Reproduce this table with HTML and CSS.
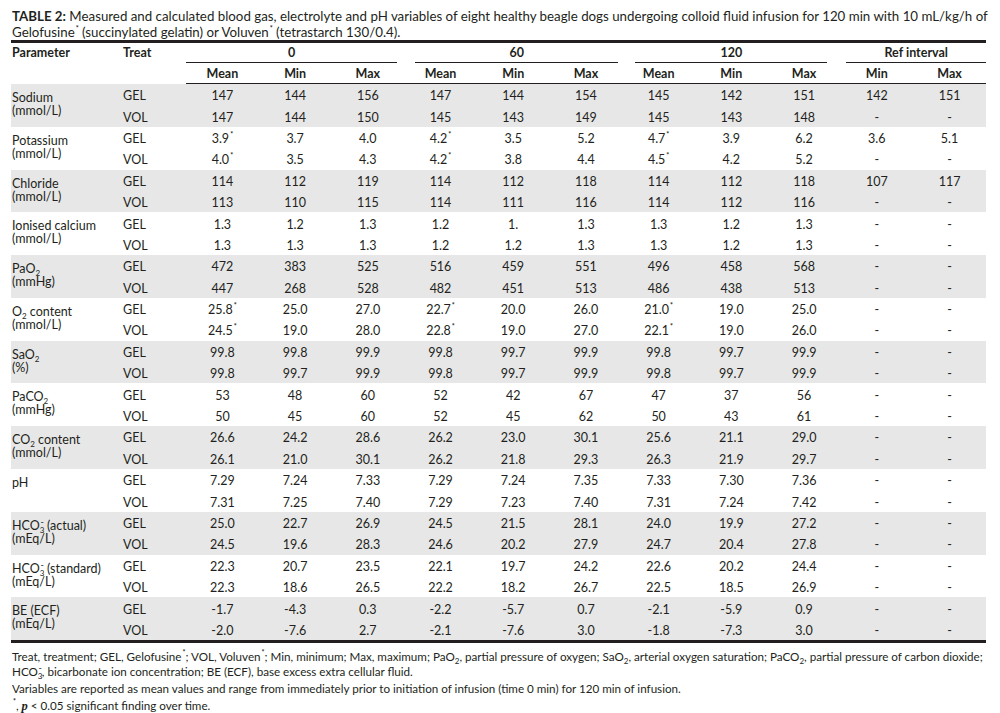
FILE: index.html
```html
<!DOCTYPE html>
<html>
<head>
<meta charset="utf-8">
<link rel="stylesheet" href="styles.css">
</head>
<body>
<div class="page">
  <p class="caption"><b>TABLE 2:</b> Measured and calculated blood gas, electrolyte and pH variables of eight healthy beagle dogs undergoing colloid fluid infusion for 120 min with 10 mL/kg/h of Gelofusine<sup class="ast">*</sup> (succinylated gelatin) or Voluven<sup class="ast">*</sup> (tetrastarch 130/0.4).</p>
  <table class="data">
    <colgroup>
      <col class="c-param"><col class="c-treat">
      <col class="c-val"><col class="c-val"><col class="c-val">
      <col class="c-val"><col class="c-val"><col class="c-val">
      <col class="c-val"><col class="c-val"><col class="c-val">
      <col class="c-val"><col class="c-val">
    </colgroup>
    <thead>
      <tr class="h1">
        <th class="param" rowspan="2">Parameter</th>
        <th class="treat" rowspan="2">Treat</th>
        <th colspan="3" class="grp"><div class="ul ul-first">0</div></th>
        <th colspan="3" class="grp"><div class="ul ul-60">60</div></th>
        <th colspan="3" class="grp"><div class="ul ul-120">120</div></th>
        <th colspan="2" class="grp"><div class="ul ul-ref">Ref interval</div></th>
      </tr>
      <tr class="h2">
        <th>Mean</th><th>Min</th><th>Max</th>
        <th>Mean</th><th>Min</th><th>Max</th>
        <th>Mean</th><th>Min</th><th>Max</th>
        <th>Min</th><th>Max</th>
      </tr>
    </thead>
    <tbody id="body"></tbody>
  </table>
  <div class="notes">
    <p>Treat, treatment; GEL, Gelofusine<sup class="ast">*</sup>; VOL, Voluven<sup class="ast">*</sup>; Min, minimum; Max, maximum; PaO<sub>2</sub>, partial pressure of oxygen; SaO<sub>2</sub>, arterial oxygen saturation; PaCO<sub>2</sub>, partial pressure of carbon dioxide; HCO<sub>3</sub><sup class="minus">-</sup>, bicarbonate ion concentration; BE (ECF), base excess extra cellular fluid.</p>
    <p>Variables are reported as mean values and range from immediately prior to initiation of infusion (time 0 min) for 120 min of infusion.</p>
    <p><sup class="ast">*</sup>, <i class="p">p</i> &lt; 0.05 significant finding over time.</p>
  </div>
</div>
<script src="app.js"></script>
</body>
</html>
```
FILE: app.js
```js
var D = '-';
var rows = [
  ['Sodium<br>(mmol/L)', ['147','144','156','147','144','154','145','142','151','142','151'], ['147','144','150','145','143','149','145','143','148',D,D]],
  ['Potassium<br>(mmol/L)', ['3.9*','3.7','4.0','4.2*','3.5','5.2','4.7*','3.9','6.2','3.6','5.1'], ['4.0*','3.5','4.3','4.2*','3.8','4.4','4.5*','4.2','5.2',D,D]],
  ['Chloride<br>(mmol/L)', ['114','112','119','114','112','118','114','112','118','107','117'], ['113','110','115','114','111','116','114','112','116',D,D]],
  ['Ionised calcium<br>(mmol/L)', ['1.3','1.2','1.3','1.2','1.','1.3','1.3','1.2','1.3',D,D], ['1.3','1.3','1.3','1.2','1.2','1.3','1.3','1.2','1.3',D,D]],
  ['PaO<sub>2</sub><br>(mmHg)', ['472','383','525','516','459','551','496','458','568',D,D], ['447','268','528','482','451','513','486','438','513',D,D]],
  ['O<sub>2</sub> content<br>(mmol/L)', ['25.8*','25.0','27.0','22.7*','20.0','26.0','21.0*','19.0','25.0',D,D], ['24.5*','19.0','28.0','22.8*','19.0','27.0','22.1*','19.0','26.0',D,D]],
  ['SaO<sub>2</sub><br>(%)', ['99.8','99.8','99.9','99.8','99.7','99.9','99.8','99.7','99.9',D,D], ['99.8','99.7','99.9','99.8','99.7','99.9','99.8','99.7','99.9',D,D]],
  ['PaCO<sub>2</sub><br>(mmHg)', ['53','48','60','52','42','67','47','37','56',D,D], ['50','45','60','52','45','62','50','43','61',D,D]],
  ['CO<sub>2</sub> content<br>(mmol/L)', ['26.6','24.2','28.6','26.2','23.0','30.1','25.6','21.1','29.0',D,D], ['26.1','21.0','30.1','26.2','21.8','29.3','26.3','21.9','29.7',D,D]],
  ['pH', ['7.29','7.24','7.33','7.29','7.24','7.35','7.33','7.30','7.36',D,D], ['7.31','7.25','7.40','7.29','7.23','7.40','7.31','7.24','7.42',D,D]],
  ['HCO<sub>3</sub><sup class="minus">-</sup> (actual)<br>(mEq/L)', ['25.0','22.7','26.9','24.5','21.5','28.1','24.0','19.9','27.2',D,D], ['24.5','19.6','28.3','24.6','20.2','27.9','24.7','20.4','27.8',D,D]],
  ['HCO<sub>3</sub><sup class="minus">-</sup> (standard)<br>(mEq/L)', ['22.3','20.7','23.5','22.1','19.7','24.2','22.6','20.2','24.4',D,D], ['22.3','18.6','26.5','22.2','18.2','26.7','22.5','18.5','26.9',D,D]],
  ['BE (ECF)<br>(mEq/L)', ['-1.7','-4.3','0.3','-2.2','-5.7','0.7','-2.1','-5.9','0.9',D,D], ['-2.0','-7.6','2.7','-2.1','-7.6','3.0','-1.8','-7.3','3.0',D,D]]
];
function cell(v) {
  if (v.slice(-1) === '*') return '<td>' + v.slice(0, -1) + '<sup class="ast">*</sup></td>';
  return '<td>' + v + '</td>';
}
var html = '';
rows.forEach(function (r, i) {
  var cls = i % 2 === 0 ? 'shade' : '';
  html += '<tr class="' + cls + ' r-gel"><td class="param" rowspan="2">' + r[0] + '</td><td class="treat">GEL</td>' + r[1].map(cell).join('') + '</tr>';
  html += '<tr class="' + cls + ' r-vol"><td class="treat">VOL</td>' + r[2].map(cell).join('') + '</tr>';
});
document.getElementById('body').innerHTML = html;
```
FILE: styles.css
```css
html, body {
  margin: 0;
  padding: 0;
  background: #ffffff;
}
.page {
  width: 1000px;
  font-family: Lato, "Open Sans", "Liberation Sans", sans-serif;
  color: #231f20;
}
.caption {
  margin: 0;
  padding: 8px 0 0 12px;
  font-size: 13.3px;
  line-height: 16px;
  height: 32px;
}
.caption b {
  font-weight: 700;
}
.ast {
  font-size: 7px;
  font-weight: 700;
  line-height: 0;
  vertical-align: 0;
  position: relative;
  top: -6px;
  margin-left: 1px;
}
sub {
  font-size: 8px;
  line-height: 0;
  vertical-align: 0;
  position: relative;
  top: 3px;
}
.minus {
  font-size: 9px;
  line-height: 0;
  vertical-align: 0;
  position: relative;
  top: -5px;
  margin-left: -4px;
}
.data {
  margin-left: 11px;
  width: 975px;
  table-layout: fixed;
  border-collapse: collapse;
  border-top: 3px solid #231f20;
  border-bottom: 3px solid #231f20;
  font-size: 12.5px;
}
.c-param { width: 109px; }
.c-treat { width: 66px; }
.c-val { width: 72.7px; }
.data th {
  font-weight: 700;
  padding: 0;
  text-align: center;
}
.data .h1 th {
  height: 20px;
  vertical-align: bottom;
}
.data th.param, .data th.treat {
  text-align: left;
  vertical-align: top;
  padding-top: 2px;
}
.data th.param { padding-left: 1px; }
.data th.treat { padding-left: 3px; }
.data .h2 th {
  height: 19px;
  padding-top: 1px;
  border-bottom: 1px solid #231f20;
}
.ul {
  border-bottom: 1px solid #231f20;
  padding-bottom: 2px;
  line-height: 15px;
}
.ul-first { margin: 0 7px 0 0; }
.ul-60 { margin: 0 4px 0 11px; }
.ul-120 { margin: 0 13px 0 13px; }
.ul-ref { margin: 0 0 0 6px; }
.data td {
  padding: 3px 0 0;
  height: 18.4px;
  text-align: center;
  line-height: 14px;
}
.data td.param {
  text-align: left;
  vertical-align: top;
  padding: 7px 0 0 1px;
  line-height: 13px;
}
.data td.treat {
  text-align: left;
  padding-left: 3px;
}
.shade td {
  background: #e7e7e7;
}
.notes {
  padding: 6px 0 0 12px;
  font-size: 11.65px;
  line-height: 15px;
}
.notes p {
  margin: 0 0 2px;
}
.notes .p {
  font-family: "Liberation Serif", serif;
  font-style: italic;
  font-weight: 700;
  font-size: 12.5px;
}
```
